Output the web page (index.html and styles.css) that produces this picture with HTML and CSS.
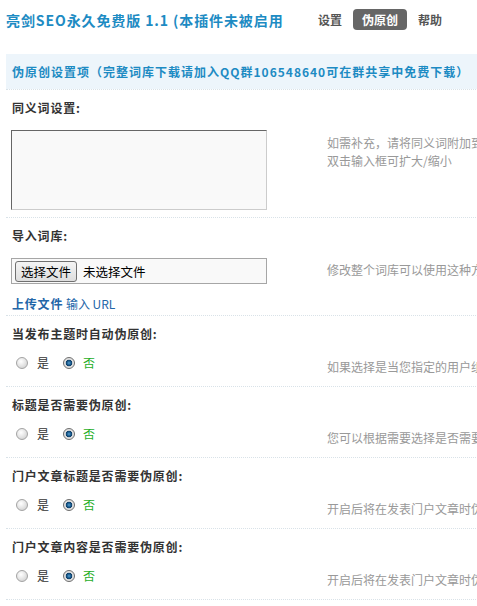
FILE: index.html
```html
<!DOCTYPE html>
<html lang="zh-CN">
<head>
<meta charset="utf-8">
<title>亮剑SEO永久免费版</title>
<link rel="stylesheet" href="styles.css">
</head>
<body>
<div class="page">
  <div class="topbar">
    <h3 class="title">亮剑SEO永久免费版 1.1 (本插件未被启用</h3>
    <ul class="nav">
      <li>设置</li>
      <li class="on">伪原创</li>
      <li>帮助</li>
    </ul>
  </div>

  <div class="partition">伪原创设置项（完整词库下载请加入QQ群106548640可在群共享中免费下载）</div>

  <div class="row">
    <div class="label">同义词设置:</div>
    <div class="content content-textarea">
      <div><textarea class="area"></textarea></div>
      <div class="hint hint-area">如需补充，请将同义词附加到<br>双击输入框可扩大/缩小</div>
    </div>
  </div>

  <div class="row">
    <div class="label">导入词库:</div>
    <div class="content content-file">
      <div>
        <div class="filebox"><button class="filebtn" type="button">选择文件</button><span class="filename">未选择文件</span></div>
        <div class="links"><a class="link strong">上传文件</a> <a class="link">输入 URL</a></div>
      </div>
      <div class="hint hint-file">修改整个词库可以使用这种方式</div>
    </div>
  </div>

  <div class="row">
    <div class="label">当发布主题时自动伪原创:</div>
    <div class="content content-radio">
      <div class="radios">
        <label class="opt"><input class="radio" type="radio" name="r1">是</label>
        <label class="opt opt-no"><input class="radio" type="radio" name="r1" checked>否</label>
      </div>
      <div class="hint hint-radio">如果选择是当您指定的用户组</div>
    </div>
  </div>

  <div class="row">
    <div class="label">标题是否需要伪原创:</div>
    <div class="content content-radio">
      <div class="radios">
        <label class="opt"><input class="radio" type="radio" name="r2">是</label>
        <label class="opt opt-no"><input class="radio" type="radio" name="r2" checked>否</label>
      </div>
      <div class="hint hint-radio">您可以根据需要选择是否需要</div>
    </div>
  </div>

  <div class="row">
    <div class="label">门户文章标题是否需要伪原创:</div>
    <div class="content content-radio">
      <div class="radios">
        <label class="opt"><input class="radio" type="radio" name="r3">是</label>
        <label class="opt opt-no"><input class="radio" type="radio" name="r3" checked>否</label>
      </div>
      <div class="hint hint-radio">开启后将在发表门户文章时伪原创</div>
    </div>
  </div>

  <div class="row row-last">
    <div class="label">门户文章内容是否需要伪原创:</div>
    <div class="content content-radio">
      <div class="radios">
        <label class="opt"><input class="radio" type="radio" name="r4">是</label>
        <label class="opt opt-no"><input class="radio" type="radio" name="r4" checked>否</label>
      </div>
      <div class="hint hint-radio">开启后将在发表门户文章时伪原创</div>
    </div>
  </div>
</div>
</body>
</html>
```

FILE: styles.css
```css
html, body {
  margin: 0;
  padding: 0;
  overflow: hidden;
  background: #fff;
}

body {
  font-family: "Noto Sans CJK SC", "Liberation Sans", sans-serif;
  font-size: 12px;
  color: #333;
}

.page {
  width: 760px;
  padding-left: 6px;
}

.topbar {
  display: flex;
  align-items: flex-start;
  height: 54px;
  padding-top: 8px;
  box-sizing: border-box;
}

.title {
  width: 303px;
  margin: 0;
  font-size: 14px;
  font-weight: bold;
  line-height: 24px;
  letter-spacing: 0.9px;
  color: #1d8bc3;
  white-space: nowrap;
}

.nav {
  list-style: none;
  display: flex;
  gap: 2px;
  margin: 1px 0 0;
  padding: 0;
}

.nav li {
  padding: 0 9px;
  height: 21px;
  line-height: 21px;
  font-weight: bold;
  color: #555;
  border-radius: 4px;
}

.nav li.on {
  background: #666;
  color: #fff;
}

.partition {
  height: 35px;
  line-height: 35px;
  padding-left: 6px;
  background: #edf5fb;
  color: #1d8bc3;
  font-weight: bold;
  letter-spacing: 1px;
  white-space: nowrap;
}

.row {
  border-top: 1px dotted #d9e2e8;
  padding-left: 5px;
}

.row-last {
  border-bottom: 1px dotted #d9e2e8;
}

.label {
  padding: 9px 0 0 1px;
  line-height: 18px;
  font-weight: bold;
  letter-spacing: 0.8px;
  color: #333;
}

.content {
  display: grid;
  grid-template-columns: 316px auto;
  align-items: start;
}

.content-textarea {
  padding: 13px 0 7px;
}

.content-file {
  padding: 13px 0 2px;
}

.content-radio {
  padding: 13px 0 10px;
}

.hint {
  color: #999;
  line-height: 18px;
  white-space: nowrap;
}

.hint-area {
  padding-top: 4px;
}

.hint-file {
  padding-top: 3px;
}

.hint-radio {
  padding-top: 2px;
}

.area {
  display: block;
  box-sizing: border-box;
  width: 256px;
  height: 80px;
  margin: 0;
  border: 1px solid;
  border-color: #666 #ccc #ccc #666;
  background: #f9f9f9;
  resize: none;
}

.filebox {
  display: flex;
  align-items: center;
  box-sizing: border-box;
  width: 256px;
  height: 26px;
  padding-left: 3px;
  border: 1px solid #a6a6a6;
  background: #f9f9f9;
}

.filebtn {
  height: 21px;
  margin: 0;
  padding: 0 5px;
  border: 1px solid #707070;
  border-radius: 3px;
  background: linear-gradient(#f4f4f4, #dedede);
  font-family: "Noto Sans CJK SC", "Liberation Sans", sans-serif;
  font-size: 12.5px;
  line-height: 19px;
  color: #000;
}

.filename {
  margin-left: 6px;
  font-size: 12.5px;
  color: #000;
}

.links {
  margin-top: 11px;
  padding-left: 1px;
  line-height: 18px;
}

.link {
  color: #2366a8;
  text-decoration: none;
}

.link.strong {
  font-weight: bold;
  letter-spacing: 0.8px;
}

.radios {
  display: flex;
  align-items: center;
  height: 14px;
  line-height: 14px;
}

.opt {
  display: flex;
  align-items: center;
  color: #333;
}

.opt-no {
  margin-left: 14px;
  color: #1fae1f;
}

.radio {
  -webkit-appearance: none;
  appearance: none;
  box-sizing: border-box;
  width: 12px;
  height: 12px;
  margin: 0 9px 0 5px;
  border: 1px solid #a3a3a3;
  border-radius: 50%;
  background: radial-gradient(circle at 40% 35%, #ffffff 0, #eaeaea 40%, #c9c9c9 100%);
}

.opt-no .radio {
  margin: 0 8px 0 0;
}

.radio:checked {
  border-color: #6d6d6d;
  background: radial-gradient(circle at 50% 50%, #5aa0d0 0, #1c5f92 1.8px, #0c3c66 3px, #dcdcdc 3.6px, #f2f2f2 100%);
}
```
